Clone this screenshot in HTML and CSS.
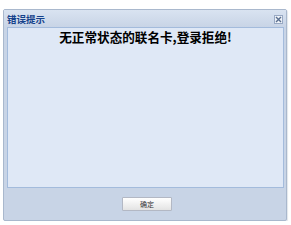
FILE: index.html
```html
<!DOCTYPE html>
<html>
<head>
<meta charset="utf-8">
<link rel="stylesheet" href="styles.css">
</head>
<body>
<div class="win">
  <div class="title">
    <span class="title-text">错误提示</span>
    <span class="close">
      <svg width="7" height="7" viewBox="0 0 7 7"><path d="M1 1L6 6M6 1L1 6" stroke="#5a6f8f" stroke-width="1.4"/></svg>
    </span>
  </div>
  <div class="body">
    <div class="msg">无正常状态的联名卡,登录拒绝!</div>
  </div>
  <div class="foot">
    <button class="btn">确定</button>
  </div>
</div>
</body>
</html>
```
FILE: styles.css
```css
html, body {
  margin: 0;
  padding: 0;
  background: #ffffff;
}
.win {
  box-sizing: border-box;
  margin: 9px 0 0 3px;
  width: 284px;
  height: 212px;
  border: 1px solid #a9b8cd;
  border-radius: 2px;
  background: #c8d4e6;
  display: flex;
  flex-direction: column;
  box-shadow: 1px 1px 1px #e2e6ec;
}
.title {
  height: 17px;
  display: flex;
  align-items: center;
  justify-content: space-between;
  padding: 0 3px 0 3px;
  background: linear-gradient(#d9e3f1, #c8d4e6);
}
.title-text {
  font-family: "Noto Sans CJK SC", sans-serif;
  font-size: 9.5px;
  font-weight: bold;
  color: #15428b;
  line-height: 10px;
}
.close {
  box-sizing: border-box;
  width: 9px;
  height: 9px;
  border: 1px solid #98a9c4;
  background: #eef2f8;
  display: flex;
  align-items: center;
  justify-content: center;
  margin-top: 2px;
}
.close svg { display: block; }
.body {
  box-sizing: border-box;
  margin: 0 2px 0 3px;
  flex: 1;
  background: #dfe8f6;
  border: 1px solid #a3bbdc;
  text-align: center;
  padding-top: 1px;
}
.msg {
  font-family: "Noto Sans CJK SC", sans-serif;
  font-size: 12.6px;
  font-weight: bold;
  color: #000;
  line-height: 15px;
}
.foot {
  height: 32px;
  display: flex;
  align-items: center;
  justify-content: center;
  padding-left: 4px;
}
.btn {
  box-sizing: border-box;
  width: 50px;
  height: 14px;
  padding: 0;
  border: 1px solid #b3b8c4;
  border-radius: 1px;
  background: linear-gradient(#ffffff, #e3e3e3);
  font-family: "Noto Sans CJK SC", sans-serif;
  font-size: 7px;
  color: #333;
  line-height: 12px;
}
```
